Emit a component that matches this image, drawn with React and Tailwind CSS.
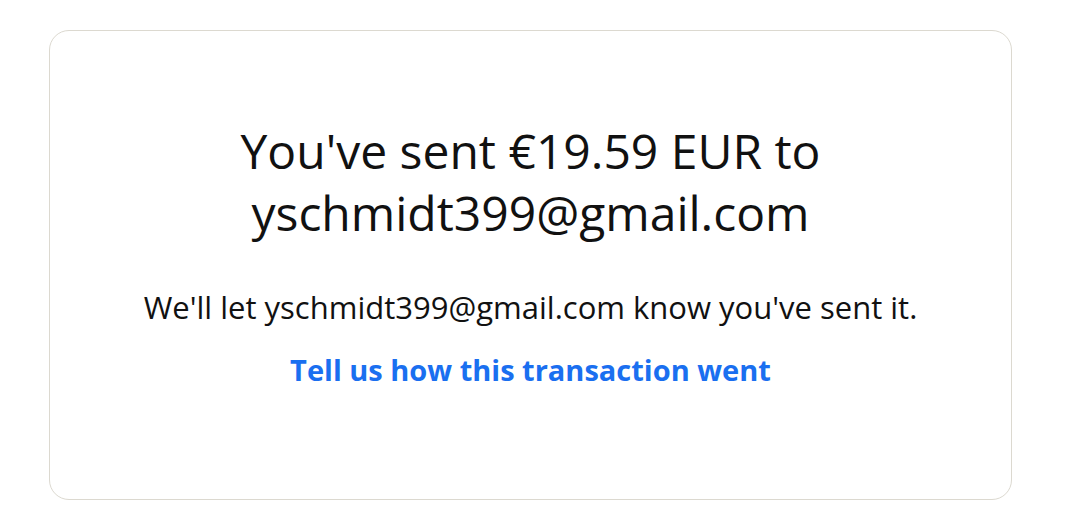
export default function App() {
  return (
    <div className="w-[1071px] h-[514px] bg-white pl-[49px] pt-[30px]" style={{ fontFamily: '"Open Sans", "Noto Sans", sans-serif' }}>
      <div className="w-[963px] h-[470px] border border-[#dcd9d0] rounded-[20px] flex flex-col items-center pt-[89px]">
        <h1 className="max-w-[640px] text-center text-[48px] leading-[62px] text-[#111111] font-normal">
          You've sent €19.59 EUR to yschmidt399@gmail.com
        </h1>
        <p className="mt-[45px] text-[31px] leading-[36px] text-[#111111] text-center">
          We'll let yschmidt399@gmail.com know you've sent it.
        </p>
        <a href="#" className="mt-[27px] text-[29px] leading-[36px] font-bold text-[#1a6ff0]">
          Tell us how this transaction went
        </a>
      </div>
    </div>
  );
}
